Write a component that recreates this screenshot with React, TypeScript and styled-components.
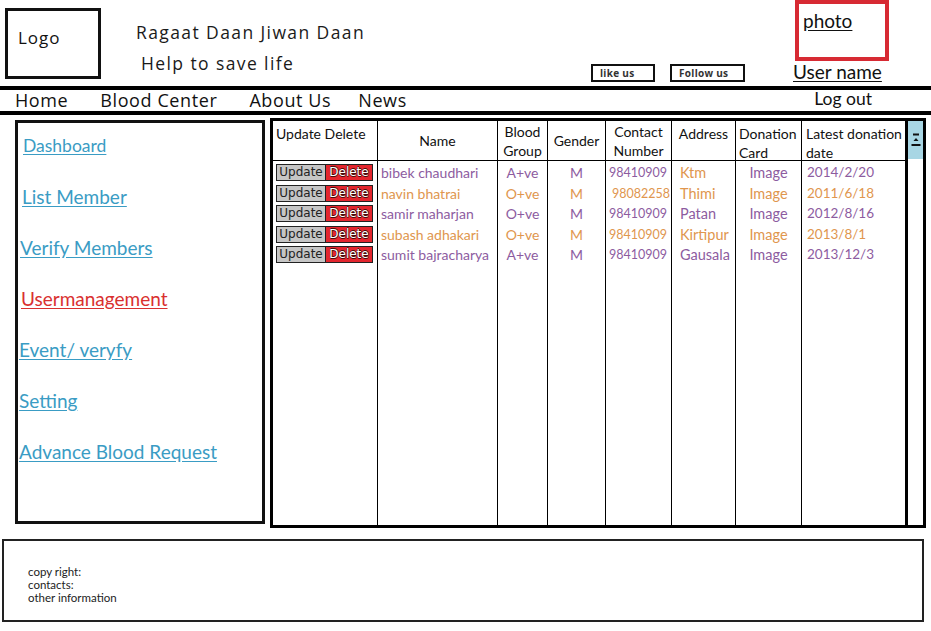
import React from 'react';
import styled, { createGlobalStyle } from 'styled-components';

const PURPLE = '#8d5c9f';
const ORANGE = '#e0964e';
const LINK = '#3a9cc4';
const RED = '#d9302f';

const GlobalStyle = createGlobalStyle`
  html, body { margin: 0; padding: 0; background: #ffffff; }
  body {
    width: 931px;
    height: 631px;
    overflow: hidden;
    font-family: "Lato", "Open Sans", sans-serif;
    color: #111;
  }
  *, *::before, *::after { box-sizing: border-box; }
`;

const Page = styled.div`
  width: 931px;
  height: 631px;
  display: flex;
  flex-direction: column;
`;

/* ---------- header ---------- */
const Header = styled.header`
  height: 86px;
  display: flex;
  align-items: flex-start;
`;

const LogoBox = styled.div`
  width: 96px;
  height: 71px;
  margin: 8px 0 0 5px;
  border: 3px solid #111;
  padding: 16px 0 0 10px;
  font-family: "Open Sans", sans-serif;
  font-size: 17px;
  letter-spacing: 1px;
  line-height: 22px;
`;

const Brand = styled.div`
  margin: 21px 0 0 35px;
  display: flex;
  flex-direction: column;
  gap: 9px;
  font-family: "Open Sans", sans-serif;
  font-size: 17.5px;
  letter-spacing: 1.4px;
  color: #1a1a1a;
`;

const BrandLine = styled.div<{ $indent?: number }>`
  line-height: 22px;
  padding-left: ${(p) => p.$indent ?? 0}px;
  white-space: nowrap;
`;

const Social = styled.div`
  margin: 64px 0 0 auto;
  display: flex;
  gap: 15px;
`;

const SocialButton = styled.div<{ $w: number }>`
  width: ${(p) => p.$w}px;
  height: 18px;
  border: 2px solid #111;
  padding-left: 7px;
  font-family: "Open Sans", sans-serif;
  font-weight: 700;
  font-size: 10px;
  letter-spacing: 0.3px;
  line-height: 14px;
  color: #333;
  white-space: nowrap;
`;

const PhotoColumn = styled.div`
  width: 96px;
  margin: 0 42px 0 48px;
  display: flex;
  flex-direction: column;
`;

const PhotoBox = styled.div`
  width: 94px;
  height: 61px;
  margin-left: 2px;
  border: 4px solid #d72a33;
  padding: 6px 0 0 4px;
`;

const UnderText = styled.span`
  font-family: "Lato", sans-serif;
  font-size: 19px;
  line-height: 22px;
  color: #111;
  text-decoration: underline;
  text-underline-offset: 2px;
  white-space: nowrap;
`;

/* ---------- nav ---------- */
const NavBar = styled.nav`
  height: 29px;
  border-top: 4px solid #000;
  border-bottom: 4px solid #000;
  display: flex;
  align-items: center;
  padding-left: 15px;
`;

const NavItem = styled.span<{ $space: number }>`
  margin-right: ${(p) => p.$space}px;
  font-family: "Open Sans", sans-serif;
  font-size: 18px;
  letter-spacing: 0.6px;
  line-height: 21px;
  color: #111;
  white-space: nowrap;
`;

const LogOut = styled.span`
  margin: 0 59px 0 auto;
  padding-bottom: 5px;
  font-family: "Lato", sans-serif;
  font-size: 17.5px;
  line-height: 21px;
  color: #111;
`;

/* ---------- main ---------- */
const Main = styled.main`
  display: flex;
  align-items: flex-start;
  padding-left: 15px;
  gap: 5px;
`;

const Sidebar = styled.aside`
  width: 250px;
  height: 404px;
  margin-top: 5px;
  border: 3px solid #111;
  padding-top: 12px;
  display: flex;
  flex-direction: column;
  gap: 29px;
`;

const SideLink = styled.a<{ $indent: number; $size?: number; $active?: boolean }>`
  padding-left: ${(p) => p.$indent}px;
  font-family: "Lato", sans-serif;
  font-size: ${(p) => p.$size ?? 19}px;
  line-height: 22px;
  color: ${(p) => (p.$active ? RED : LINK)};
  text-decoration: underline;
  text-underline-offset: 2px;
  white-space: nowrap;
  cursor: pointer;
`;

const TableBox = styled.section`
  width: 656px;
  height: 410px;
  margin-top: 3px;
  border: 3px solid #000;
  display: flex;
`;

const Grid = styled.div`
  width: 632px;
  display: grid;
  grid-template-columns: 105px 120px 50px 58px 66px 64px 66px 103px;
  grid-template-rows: 40px repeat(5, 20.5px) 1fr;
`;

const HeadCell = styled.div<{ $align: string; $valign: 'top' | 'middle'; $pad: number; $last?: boolean }>`
  border-right: ${(p) => (p.$last ? 'none' : '1px solid #000')};
  border-bottom: 1px solid #000;
  display: flex;
  flex-direction: column;
  justify-content: ${(p) => (p.$valign === 'top' ? 'flex-start' : 'center')};
  align-items: ${(p) => p.$align};
  text-align: ${(p) => (p.$align === 'center' ? 'center' : 'left')};
  padding: ${(p) => (p.$valign === 'top' ? '3px' : '0')} 0 0 ${(p) => p.$pad}px;
  font-family: "Lato", sans-serif;
  font-size: 14px;
  line-height: 19px;
  color: #111;
  white-space: nowrap;
  overflow: hidden;
`;

const DataCell = styled.div<{ $align: string; $pad: number; $color?: string; $size?: number; $last?: boolean }>`
  border-right: ${(p) => (p.$last ? 'none' : '1px solid #000')};
  padding: 3px 0 0 ${(p) => p.$pad}px;
  text-align: ${(p) => p.$align};
  font-family: "Lato", sans-serif;
  font-size: ${(p) => p.$size ?? 14}px;
  line-height: 17px;
  color: ${(p) => p.$color ?? '#111'};
  white-space: nowrap;
  overflow: hidden;
`;

const ActionPair = styled.div`
  width: 97px;
  height: 17px;
  display: flex;
  border: 1px solid #222;
  font-family: "DejaVu Sans", sans-serif;
  font-size: 12px;
  line-height: 15px;
`;

const UpdateButton = styled.span`
  width: 49px;
  background: #c6c6c6;
  border-right: 1px solid #222;
  color: #222;
  text-align: center;
`;

const DeleteButton = styled.span`
  flex: 1;
  background: #e3262e;
  color: #fff;
  text-align: center;
  text-shadow: -0.6px 0 #4a0b0b, 0.6px 0 #4a0b0b, 0 -0.6px #4a0b0b, 0 0.6px #4a0b0b;
`;

const ScrollTrack = styled.div`
  width: 18px;
  border-left: 3px solid #000;
  display: flex;
  flex-direction: column;
`;

const ScrollThumb = styled.div`
  height: 38px;
  background: #a8d6e4;
  display: flex;
  align-items: center;
  justify-content: center;
`;

/* ---------- footer ---------- */
const Footer = styled.footer`
  width: 922px;
  height: 83px;
  margin: 11px 0 0 2px;
  border: 2px solid #222;
  padding: 24px 0 0 24px;
  font-family: "Lato", sans-serif;
  font-size: 11.5px;
  line-height: 13px;
  color: #222;
`;

const FooterLine = styled.div``;

/* ---------- data ---------- */
type Row = {
  name: string;
  group: string;
  gender: string;
  contact: string;
  address: string;
  date: string;
  tone: string;
  addressTone?: string;
  contactPad?: number;
};

const rows: Row[] = [
  { name: 'bibek chaudhari', group: 'A+ve', gender: 'M', contact: '98410909', address: 'Ktm', date: '2014/2/20', tone: PURPLE, addressTone: ORANGE },
  { name: 'navin bhatrai', group: 'O+ve', gender: 'M', contact: '98082258', address: 'Thimi', date: '2011/6/18', tone: ORANGE, contactPad: 6 },
  { name: 'samir maharjan', group: 'O+ve', gender: 'M', contact: '98410909', address: 'Patan', date: '2012/8/16', tone: PURPLE },
  { name: 'subash adhakari', group: 'O+ve', gender: 'M', contact: '98410909', address: 'Kirtipur', date: '2013/8/1', tone: ORANGE },
  { name: 'sumit bajracharya', group: 'A+ve', gender: 'M', contact: '98410909', address: 'Gausala', date: '2013/12/3', tone: PURPLE },
];

const headers: { lines: string[]; align: string; valign: 'top' | 'middle'; pad: number }[] = [
  { lines: ['Update Delete'], align: 'flex-start', valign: 'top', pad: 3 },
  { lines: ['Name'], align: 'center', valign: 'middle', pad: 0 },
  { lines: ['Blood', 'Group'], align: 'center', valign: 'middle', pad: 0 },
  { lines: ['Gender'], align: 'center', valign: 'middle', pad: 0 },
  { lines: ['Contact', 'Number'], align: 'center', valign: 'middle', pad: 0 },
  { lines: ['Address'], align: 'center', valign: 'top', pad: 0 },
  { lines: ['Donation', 'Card'], align: 'flex-start', valign: 'top', pad: 3 },
  { lines: ['Latest donation', 'date'], align: 'flex-start', valign: 'top', pad: 4 },
];

const sideLinks = [
  { label: 'Dashboard', indent: 5, size: 17.5 },
  { label: 'List Member', indent: 4 },
  { label: 'Verify Members', indent: 2 },
  { label: 'Usermanagement', indent: 3, active: true },
  { label: 'Event/ veryfy', indent: 1 },
  { label: 'Setting', indent: 1 },
  { label: 'Advance Blood Request', indent: 1 },
];

const ThumbIcon = () => (
  <svg width="10" height="14" viewBox="0 0 10 14" aria-hidden="true">
    <rect x="2" y="0.5" width="6" height="2" fill="#111" />
    <polygon points="2.5,8 5,5 7.5,8" fill="#111" />
    <rect x="0.5" y="11" width="9" height="2" fill="#111" />
  </svg>
);

export default function App() {
  return (
    <>
      <GlobalStyle />
      <Page>
        <Header>
          <LogoBox>Logo</LogoBox>
          <Brand>
            <BrandLine>Ragaat Daan Jiwan Daan</BrandLine>
            <BrandLine $indent={5}>Help to save life</BrandLine>
          </Brand>
          <Social>
            <SocialButton $w={64}>like us</SocialButton>
            <SocialButton $w={75}>Follow us</SocialButton>
          </Social>
          <PhotoColumn>
            <PhotoBox>
              <UnderText>photo</UnderText>
            </PhotoBox>
            <UnderText>User name</UnderText>
          </PhotoColumn>
        </Header>

        <NavBar>
          <NavItem $space={32}>Home</NavItem>
          <NavItem $space={32}>Blood Center</NavItem>
          <NavItem $space={27}>About Us</NavItem>
          <NavItem $space={0}>News</NavItem>
          <LogOut>Log out</LogOut>
        </NavBar>

        <Main>
          <Sidebar>
            {sideLinks.map((l) => (
              <SideLink key={l.label} $indent={l.indent} $size={l.size} $active={l.active}>
                {l.label}
              </SideLink>
            ))}
          </Sidebar>

          <TableBox>
            <Grid>
              {headers.map((h, i) => (
                <HeadCell key={i} $align={h.align} $valign={h.valign} $pad={h.pad} $last={i === 7}>
                  {h.lines.map((ln) => (
                    <span key={ln}>{ln}</span>
                  ))}
                </HeadCell>
              ))}
              {rows.map((r) => (
                <React.Fragment key={r.name}>
                  <DataCell $align="left" $pad={3}>
                    <ActionPair>
                      <UpdateButton>Update</UpdateButton>
                      <DeleteButton>Delete</DeleteButton>
                    </ActionPair>
                  </DataCell>
                  <DataCell $align="left" $pad={3} $color={r.tone}>{r.name}</DataCell>
                  <DataCell $align="center" $pad={0} $color={r.tone}>{r.group}</DataCell>
                  <DataCell $align="center" $pad={0} $color={r.tone}>{r.gender}</DataCell>
                  <DataCell $align="left" $pad={r.contactPad ?? 3} $color={r.tone} $size={12.5}>{r.contact}</DataCell>
                  <DataCell $align="left" $pad={8} $color={r.addressTone ?? r.tone} $size={14.5}>{r.address}</DataCell>
                  <DataCell $align="center" $pad={0} $color={r.tone} $size={14.5}>Image</DataCell>
                  <DataCell $align="left" $pad={5} $color={r.tone} $size={13.5} $last>{r.date}</DataCell>
                </React.Fragment>
              ))}
              {Array.from({ length: 8 }).map((_, i) => (
                <DataCell key={`f${i}`} $align="left" $pad={0} $last={i === 7} />
              ))}
            </Grid>
            <ScrollTrack>
              <ScrollThumb>
                <ThumbIcon />
              </ScrollThumb>
            </ScrollTrack>
          </TableBox>
        </Main>

        <Footer>
          <FooterLine>copy right:</FooterLine>
          <FooterLine>contacts:</FooterLine>
          <FooterLine>other information</FooterLine>
        </Footer>
      </Page>
    </>
  );
}
